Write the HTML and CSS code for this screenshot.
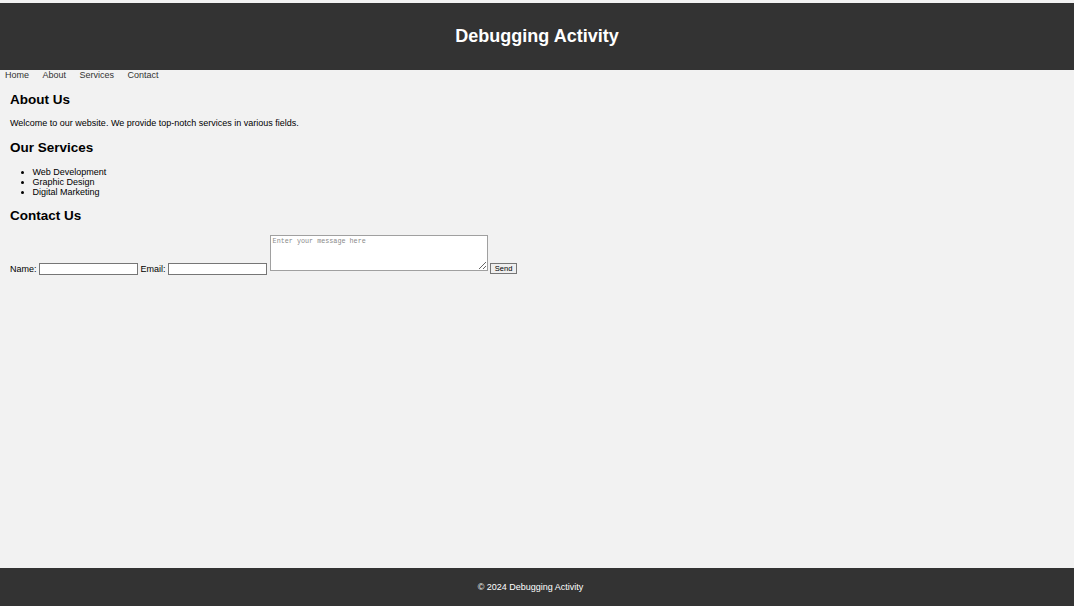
FILE: index.html
```html
<!DOCTYPE html>
<html lang="en">
<head>
<meta charset="utf-8">
<title>Debugging Activity</title>
<link rel="stylesheet" href="styles.css">
</head>
<body>
<header class="site-header">
  <h1 class="site-title">Debugging Activity</h1>
</header>
<nav class="site-nav">
  <a href="#home">Home</a>
  <a href="#about">About</a>
  <a href="#services">Services</a>
  <a href="#contact">Contact</a>
</nav>
<main class="content">
  <section id="about">
    <h2 class="first-heading">About Us</h2>
    <p>Welcome to our website. We provide top-notch services in various fields.</p>
  </section>
  <section id="services">
    <h2>Our Services</h2>
    <ul>
      <li>Web Development</li>
      <li>Graphic Design</li>
      <li>Digital Marketing</li>
    </ul>
  </section>
  <section id="contact">
    <h2>Contact Us</h2>
    <form class="contact-form">
      <label for="name">Name:</label> <input type="text" id="name" class="field"> <label for="email">Email:</label> <input type="email" id="email" class="field"> <textarea class="message" placeholder="Enter your message here"></textarea> <button type="button" class="send">Send</button>
    </form>
  </section>
</main>
<footer class="site-footer">
  <p>&copy; 2024 Debugging Activity</p>
</footer>
</body>
</html>
```

FILE: styles.css
```css
html, body {
  margin: 0;
  padding: 0;
}

body {
  padding-top: 3px;
  box-sizing: border-box;
  min-height: 100vh;
  display: flex;
  flex-direction: column;
  background: #f2f2f2;
  color: #000;
  font-family: "Liberation Sans", Arial, sans-serif;
  font-size: 9px;
  line-height: 1.15;
}

.site-header {
  background: #333;
  color: #fff;
  padding: 23px 0;
  text-align: center;
}

.site-title {
  margin: 0;
  font-size: 18px;
  line-height: 21px;
  font-weight: bold;
}

.site-nav {
  display: flex;
  gap: 13.5px;
  padding: 0 5px;
  height: 10px;
  line-height: 10px;
}

.site-nav a {
  color: #333;
  text-decoration: none;
}

.content {
  flex: 1;
  padding: 0 10px;
}

.content h2 {
  font-size: 13.5px;
  margin: 11.2px 0;
  line-height: 1.15;
}

.content h2.first-heading {
  margin-top: 11.7px;
}

.content p {
  margin: 9px 0;
}

.content ul {
  margin: 9px 0;
  padding-left: 22.5px;
  line-height: 10px;
}

.contact-form {
  margin: 0;
}

.field {
  box-sizing: border-box;
  width: 99px;
  height: 12px;
  margin: 0;
  padding: 0 1px;
  border: 1px solid #767676;
  background: #fff;
  font: 7.5px "Liberation Sans", Arial, sans-serif;
  vertical-align: 0.5px;
}

.message {
  box-sizing: border-box;
  width: 218px;
  height: 36px;
  margin: 0 0 1px;
  padding: 1px 2px;
  border: 1px solid #a0a0a0;
  background: #fff;
  font: 6.75px "Liberation Mono", "Courier New", monospace;
  vertical-align: baseline;
}

.message::placeholder {
  color: #8a8a8a;
}

.send {
  box-sizing: border-box;
  height: 11px;
  width: 27px;
  margin: 0;
  padding: 0;
  border: 1px solid #767676;
  background: #efefef;
  color: #000;
  font: 7.5px "Liberation Sans", Arial, sans-serif;
  line-height: 9px;
  vertical-align: 0.5px;
}

.site-footer {
  background: #333;
  color: #fff;
  text-align: center;
  height: 38px;
  padding-right: 13px;
  display: flex;
  align-items: center;
  justify-content: center;
}

.site-footer p {
  margin: 0;
  font-size: 9px;
}
```
